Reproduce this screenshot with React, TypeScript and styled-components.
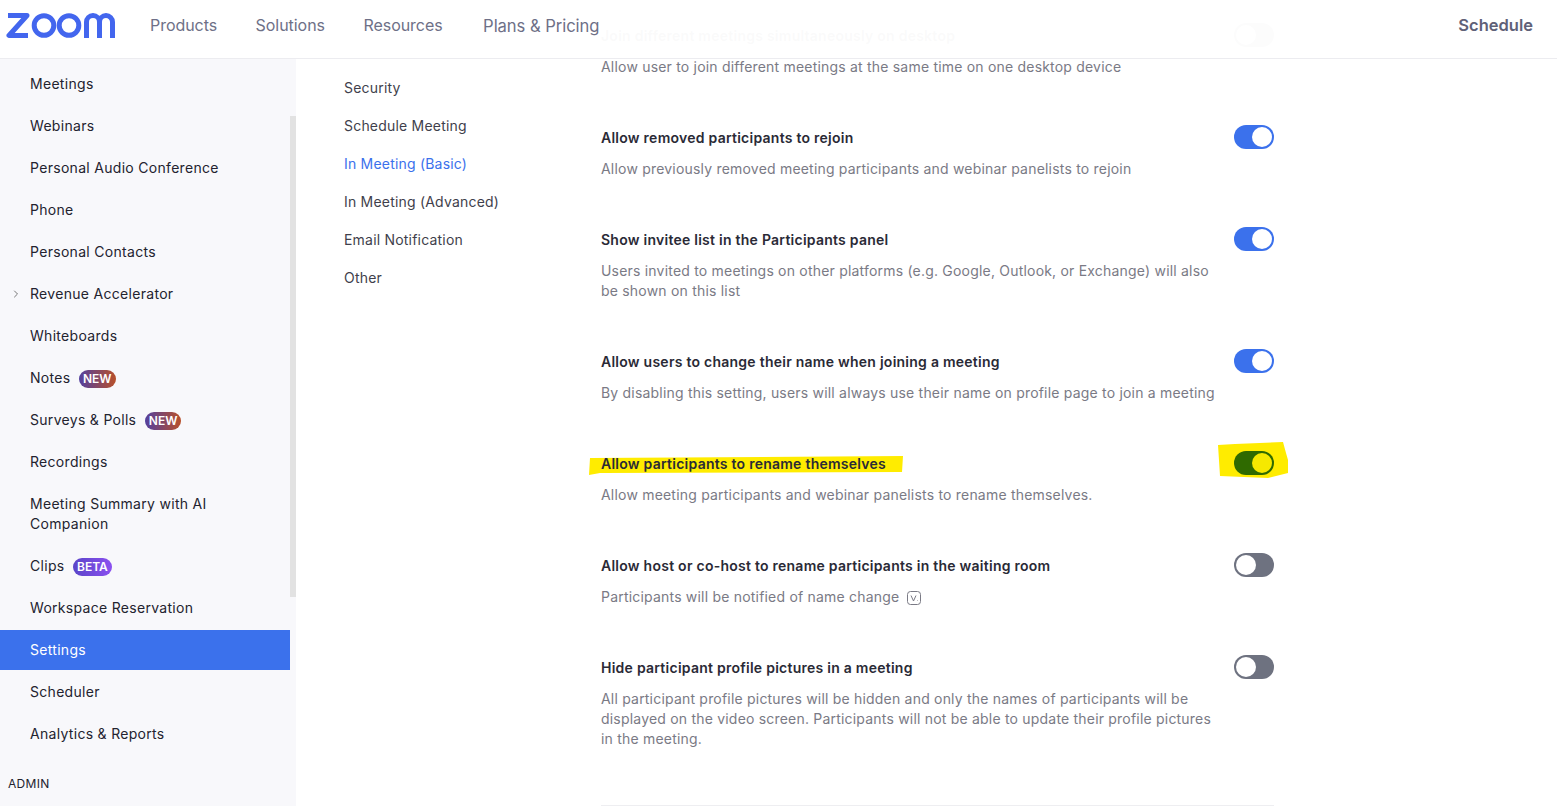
import styled, { createGlobalStyle } from 'styled-components';
import { ChevronRight } from 'lucide-react';

const GlobalStyle = createGlobalStyle`
  html, body {
    margin: 0;
    padding: 0;
    background: #fff;
    font-family: Inter, "Liberation Sans", sans-serif;
  }
`;

const Page = styled.div`
  position: relative;
  display: flex;
  width: 1557px;
  height: 806px;
  overflow: hidden;
`;

const Header = styled.header`
  position: absolute;
  inset: 0 0 auto;
  z-index: 3;
  height: 59px;
  box-sizing: border-box;
  display: flex;
  align-items: center;
  padding: 0 24px 8px 6px;
  background: rgba(255, 255, 255, 0.975);
  border-bottom: 1px solid #ececf0;
`;

const TopNav = styled.nav`
  display: flex;
  gap: 38.5px;
  margin-left: 34px;
  flex: 1;
`;

const TopLink = styled.a<{ $large?: boolean }>`
  font-size: ${({ $large }) => ($large ? '16.6px' : '16px')};
  margin: ${({ $large }) => ($large ? '2px 0 0 2px' : '1px 0 0')};
  letter-spacing: -0.05px;
  color: #6e7087;
`;

const Schedule = styled.a`
  font-size: 16.5px;
  font-weight: 600;
  color: #5f6178;
`;

const Sidebar = styled.aside`
  display: flex;
  width: 296px;
  flex: none;
  margin-top: 58px;
  background: #f8f8fb;
`;

const SideList = styled.div`
  width: 290px;
  padding-top: 6px;
  display: flex;
  flex-direction: column;
  gap: 2px;
`;

const SideItem = styled.div<{ $active?: boolean }>`
  position: relative;
  padding: 10px 60px 10px 30px;
  font-size: 14px;
  line-height: 20px;
  letter-spacing: 0.3px;
  color: ${({ $active }) => ($active ? '#fff' : '#23232f')};
  background: ${({ $active }) => ($active ? '#3b71ec' : 'transparent')};
`;

const Caret = styled(ChevronRight)`
  position: absolute;
  left: 10px;
  top: 14px;
  color: #777;
`;

const Badge = styled.span<{ $beta?: boolean }>`
  display: inline-block;
  margin: 2px 0 0 8.5px;
  padding: 0 4px;
  height: 18px;
  line-height: 18px;
  border-radius: 9px;
  font-size: 12px;
  font-weight: 600;
  letter-spacing: 0;
  color: #fff;
  vertical-align: top;
  background: ${({ $beta }) =>
    $beta ? 'linear-gradient(90deg, #5a45c8, #8b50f0)' : 'linear-gradient(90deg, #53409f, #b8502a)'};
`;

const AdminLabel = styled.div`
  margin-top: 18px;
  padding-left: 8px;
  font-size: 12px;
  line-height: 20px;
  letter-spacing: 0.3px;
  color: #23232f;
`;

const ScrollTrack = styled.div`
  width: 6px;
  padding-top: 58px;
`;

const ScrollThumb = styled.div`
  height: 481px;
  background: #e2e2e2;
`;

const Tabs = styled.div`
  width: 305px;
  flex: none;
  box-sizing: border-box;
  padding: 78px 0 0 48px;
  display: flex;
  flex-direction: column;
  gap: 18px;
`;

const Tab = styled.div<{ $active?: boolean }>`
  font-size: 14px;
  line-height: 20px;
  letter-spacing: 0.2px;
  color: ${({ $active }) => ($active ? '#3b71ec' : '#3f3f4c')};
`;

const Settings = styled.main`
  width: 673px;
  flex: none;
  padding-top: 26px;
`;

const Row = styled.section`
  display: flex;
  justify-content: space-between;
  align-items: flex-start;
  margin-bottom: 51px;
`;

const RowText = styled.div`
  width: 618px;
`;

const Title = styled.div`
  position: relative;
  font-size: 14px;
  font-weight: 600;
  line-height: 20px;
  letter-spacing: 0.25px;
  color: #2a2a36;
  margin-bottom: 11px;
`;

const TitleText = styled.span`
  position: relative;
`;

const Description = styled.div`
  font-size: 14px;
  line-height: 20px;
  letter-spacing: 0.2px;
  color: #7a7a85;
`;

const ToggleSlot = styled.div`
  position: relative;
  width: 40px;
  height: 24px;
  margin-top: -3px;
`;

const Switch = styled.div<{ $on?: boolean }>`
  position: relative;
  width: 40px;
  height: 24px;
  border-radius: 12px;
  background: ${({ $on }) => ($on ? '#3b71ec' : '#6e7280')};
`;

const Knob = styled.div<{ $on?: boolean }>`
  position: absolute;
  top: 2px;
  left: ${({ $on }) => ($on ? '18px' : '2px')};
  width: 20px;
  height: 20px;
  border-radius: 50%;
  background: #fff;
`;

const MarkedSwitch = styled(Switch)`
  background: #2f6a00;
`;

const MarkedKnob = styled(Knob)`
  background: #f6e900;
`;

const TitleMark = styled.svg`
  position: absolute;
  left: -13px;
  top: 0;
`;

const SwitchMark = styled.svg`
  position: absolute;
  left: -16px;
  top: -9px;
`;

const Footline = styled.div`
  height: 1px;
  margin-top: 56px;
  background: #eeeef1;
`;

const HintIcon = styled.svg`
  margin-left: 8px;
  vertical-align: -3px;
`;

const ZoomLogo = () => (
  <svg width="110" height="25" viewBox="0 0 110 25" fill="none" stroke="#4366ee" strokeWidth="5">
    <path d="M2 2.5h19L3 22.5h19" strokeLinejoin="round" />
    <circle cx="38" cy="12.5" r="9.8" />
    <circle cx="63" cy="12.5" r="9.8" />
    <path
      d="M80.5 25V9a6.5 6.5 0 0 1 13 0v16M93.5 25V9a6.5 6.5 0 0 1 13 0v16"
      strokeLinejoin="round"
    />
  </svg>
);

const sideItems: { label: string; badge?: 'NEW' | 'BETA'; caret?: boolean; active?: boolean }[] = [
  { label: 'Meetings' },
  { label: 'Webinars' },
  { label: 'Personal Audio Conference' },
  { label: 'Phone' },
  { label: 'Personal Contacts' },
  { label: 'Revenue Accelerator', caret: true },
  { label: 'Whiteboards' },
  { label: 'Notes', badge: 'NEW' },
  { label: 'Surveys & Polls', badge: 'NEW' },
  { label: 'Recordings' },
  { label: 'Meeting Summary with AI Companion' },
  { label: 'Clips', badge: 'BETA' },
  { label: 'Workspace Reservation' },
  { label: 'Settings', active: true },
  { label: 'Scheduler' },
  { label: 'Analytics & Reports' },
];

const tabs = ['Security', 'Schedule Meeting', 'In Meeting (Basic)', 'In Meeting (Advanced)', 'Email Notification', 'Other'];

const rows = [
  { title: 'Join different meetings simultaneously on desktop', text: 'Allow user to join different meetings at the same time on one desktop device', on: false },
  { title: 'Allow removed participants to rejoin', text: 'Allow previously removed meeting participants and webinar panelists to rejoin', on: true },
  { title: 'Show invitee list in the Participants panel', text: 'Users invited to meetings on other platforms (e.g. Google, Outlook, or Exchange) will also be shown on this list', on: true },
  { title: 'Allow users to change their name when joining a meeting', text: 'By disabling this setting, users will always use their name on profile page to join a meeting', on: true },
  { title: 'Allow participants to rename themselves', text: 'Allow meeting participants and webinar panelists to rename themselves.', on: true, marked: true },
  { title: 'Allow host or co-host to rename participants in the waiting room', text: 'Participants will be notified of name change', on: false, hint: true },
  { title: 'Hide participant profile pictures in a meeting', text: 'All participant profile pictures will be hidden and only the names of participants will be displayed on the video screen. Participants will not be able to update their profile pictures in the meeting.', on: false },
];

export default function App() {
  return (
    <>
      <GlobalStyle />
      <Page>
        <Header>
          <ZoomLogo />
          <TopNav>
            <TopLink>Products</TopLink>
            <TopLink>Solutions</TopLink>
            <TopLink>Resources</TopLink>
            <TopLink $large>Plans &amp; Pricing</TopLink>
          </TopNav>
          <Schedule>Schedule</Schedule>
        </Header>
        <Sidebar>
          <SideList>
            {sideItems.map((item) => (
              <SideItem key={item.label} $active={item.active}>
                {item.caret && <Caret size={12} />}
                {item.label}
                {item.badge && <Badge $beta={item.badge === 'BETA'}>{item.badge}</Badge>}
              </SideItem>
            ))}
            <AdminLabel>ADMIN</AdminLabel>
          </SideList>
          <ScrollTrack>
            <ScrollThumb />
          </ScrollTrack>
        </Sidebar>
        <Tabs>
          {tabs.map((tab) => (
            <Tab key={tab} $active={tab === 'In Meeting (Basic)'}>
              {tab}
            </Tab>
          ))}
        </Tabs>
        <Settings>
          {rows.map((row) => (
            <Row key={row.title}>
              <RowText>
                <Title>
                  {row.marked && (
                    <TitleMark width="316" height="22" viewBox="0 0 316 22">
                      <path d="M2 4 L315 2 L314 18 L12 19 L1 21Z" fill="#ffec00" />
                    </TitleMark>
                  )}
                  <TitleText>{row.title}</TitleText>
                </Title>
                <Description>
                  {row.text}
                  {row.hint && (
                    <HintIcon width="14" height="14" viewBox="0 0 14 14" fill="none" stroke="#7a7a85">
                      <rect x="0.5" y="0.5" width="13" height="13" rx="3" />
                      <path d="M4 4.5 L6.5 10 L9 4.5M10.5 9.5v.5" />
                    </HintIcon>
                  )}
                </Description>
              </RowText>
              <ToggleSlot>
                {row.marked ? (
                  <>
                    <SwitchMark width="71" height="37" viewBox="0 0 71 37">
                      <path d="M0 3 L17 2 L65 0 L68 11 L70 18 L70 31 L50 36 L2 34Z" fill="#ffec00" />
                    </SwitchMark>
                    <MarkedSwitch $on>
                      <MarkedKnob $on />
                    </MarkedSwitch>
                  </>
                ) : (
                  <Switch $on={row.on}>
                    <Knob $on={row.on} />
                  </Switch>
                )}
              </ToggleSlot>
            </Row>
          ))}
          <Footline />
        </Settings>
      </Page>
    </>
  );
}
